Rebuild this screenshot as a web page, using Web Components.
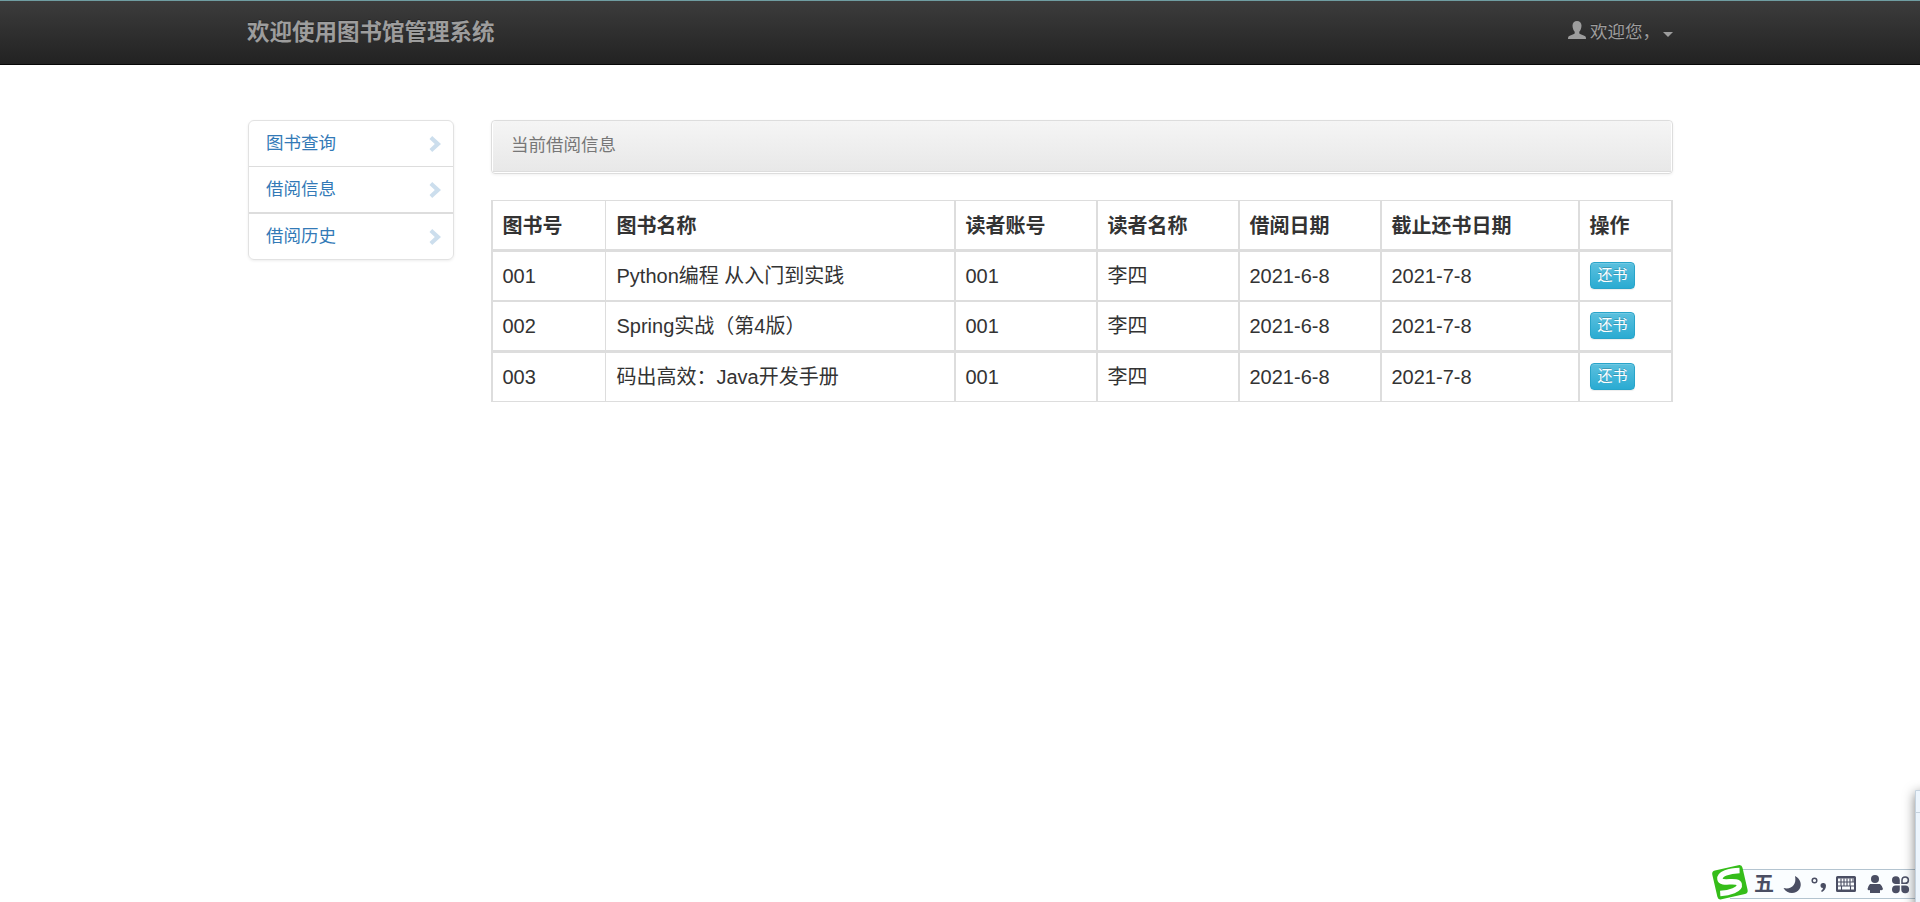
<!DOCTYPE html>
<html lang="zh-CN">
<head>
<meta charset="utf-8">
<title>图书馆管理系统</title>
<style>
  html, body{
    margin: 0;
    height: 100%;
    overflow: hidden;
  }
  body{
    background: #fff;
    color: #333;
    font-family: "Liberation Sans", "Noto Sans CJK SC", sans-serif;
    font-size: 17.5px;
    line-height: 25px;
  }
  main{
    display: flex;
    align-items: flex-start;
    gap: 37px;
    width: 1425px;
    margin: 55px 0 0 248px;
  }
  .content{
    width: 1182px;
  }
</style>
</head>
<body>

<template id="nav-bar">
  <style>
    :host{
      display: flex;
      box-sizing: border-box;
      height: 65px;
      justify-content: space-between;
      align-items: center;
      padding: 0 247px 0 247px;
      border-top: 1px solid #6f9da1;
      border-bottom: 1px solid #080808;
      background: linear-gradient(#3c3c3c, #222);
      color: #9d9d9d;
      text-shadow: 0 -1px 0 rgba(0,0,0,.25);
    }
    .brand{
      font-size: 22.5px;
      font-weight: bold;
    }
    .user{
      display: flex;
      align-items: center;
    }
    .user svg{
      margin: -5px 4px 0 0;
    }
    .caret{
      margin: 3px 0 0 3px;
      border-top: 5px solid;
      border-left: 5px solid transparent;
      border-right: 5px solid transparent;
    }
  </style>
  <div class="brand"><slot name="brand"></slot></div>
  <div class="user">
    <svg width="18" height="18" viewBox="0 0 18 18" fill="#9d9d9d"><path d="M9 0C6.400 0 4.500 1.800 4.500 4.500C4.500 7.500 5.600 9.600 6.700 10.800V12.500C5.500 13.600 1.500 14.300.5 15.500Q0 16.300 0 18H18Q18 16.300 17.500 15.500C16.500 14.300 12.500 13.600 11.300 12.500V10.800C12.400 9.600 13.500 7.500 13.500 4.500C13.500 1.800 11.600 0 9 0Z"/></svg>
    <slot></slot>
    <span class="caret"></span>
  </div>
</template>

<template id="side-menu">
  <style>
    :host{
      display: block;
      box-sizing: border-box;
      width: 206px;
      border: 1px solid #e2e2e2;
      border-radius: 6px;
      box-shadow: 0 1px 3px rgba(0,0,0,.075);
    }
  </style>
  <slot></slot>
</template>

<template id="side-item">
  <style>
    :host{
      display: flex;
      height: 45px;
      align-items: center;
      justify-content: space-between;
      padding: 0 12px 0 17px;
      color: #337ab7;
    }
    :host(:nth-child(2)){
      border-top: 1px solid #ddd;
      border-bottom: 2px solid #ddd;
    }
    span{
      margin-top: -1px;
    }
    svg{
      margin-top: 0;
    }
  </style>
  <span><slot></slot></span>
  <svg width="12" height="16" viewBox="0 0 12 16" fill="#ccdeed"><path d="M3.200 0L12 8L3.200 16L0.500 12.900L5.800 8L0.500 3.100Z"/></svg>
</template>

<template id="panel-box">
  <style>
    :host{
      display: block;
      box-sizing: border-box;
      height: 54px;
      padding: 0 1px 1px;
      border: 1px solid #ddd;
      border-radius: 4px;
      box-shadow: 0 1px 3px rgba(0,0,0,.06);
    }
    .heading{
      box-sizing: border-box;
      height: 51px;
      padding: 12px 18px;
      border-bottom: 1px solid #ddd;
      border-radius: 3px 3px 0 0;
      background: linear-gradient(#f5f5f5, #e8e8e8);
      color: #777;
    }
  </style>
  <div class="heading"><slot></slot></div>
</template>

<template id="lend-table">
  <style>
    :host{
      display: block;
      margin-top: 26px;
    }
    table{
      width: 1182px;
      table-layout: fixed;
      border-collapse: separate;
      border-spacing: 0;
      border: solid #ddd;
      border-width: 1px 0 0 2px;
      font-size: 20px;
      line-height: 28px;
    }
    th, td{
      box-sizing: border-box;
      height: 50px;
      padding: 0 10px 0 9.5px;
      border: solid #ddd;
      border-width: 0 2px 2px 0;
      text-align: left;
      white-space: nowrap;
    }
    th{
      padding-top: 2px;
    }
    tr:nth-child(odd) > *{
      height: 51px;
      border-bottom-width: 3px;
    }
    tr:last-child > *{
      height: 49px;
      border-bottom-width: 1px;
    }
    tr > :first-child{
      border-right-width: 1px;
    }
    tr > :nth-child(2){
      padding-left: 10.5px;
    }
  </style>
  <table>
    <colgroup>
      <col style="width:113px"><col style="width:350px"><col style="width:142px"><col style="width:142px"><col style="width:142px"><col style="width:198px"><col style="width:93px">
    </colgroup>
    <tbody></tbody>
  </table>
</template>

<template id="info-button">
  <style>
    :host{
      display: block;
      width: 45px;
      margin: -1px 0 1px .5px;
    }
    button{
      display: block;
      box-sizing: border-box;
      width: 45px;
      height: 27px;
      padding: 0;
      border: 1px solid #28a4c9;
      border-radius: 4px;
      background: linear-gradient(#5bc0de, #2aabd2);
      box-shadow: inset 0 1px 0 rgba(255,255,255,.15), 0 1px 1px rgba(0,0,0,.075);
      color: #fff;
      font: 15px/22px "Liberation Sans", "Noto Sans CJK SC", sans-serif;
      text-shadow: 0 -1px 0 rgba(0,0,0,.2);
    }
  </style>
  <button><slot></slot></button>
</template>

<!-- Input method bar floating over the page corner -->
<template id="ime-bar">
  <style>
    :host{
      position: absolute;
      right: 0;
      bottom: 0;
      width: 220px;
      height: 122px;
      overflow: hidden;
    }
    svg{
      display: block;
    }
    .window{
      filter: drop-shadow(0 3px 6px rgba(0,0,0,.5));
    }
    .mode{
      position: absolute;
      left: 54px;
      top: 89px;
      color: #4a4e63;
      font: bold 20px/28px "Noto Sans CJK SC", sans-serif;
    }
  </style>
  <svg width="220" height="122" viewBox="0 0 220 122">
    <path d="M42 89H215V119H42Z" fill="#fafdff"/>
    <path d="M42 89.500H215M30 118.500H215" stroke="#b4c4d0"/>
    <path class="window" d="M215 10H260V160H215Z" fill="#edf5fd"/>
    <path d="M215.500 122V10.500H220M215 32.500H220" fill="none" stroke="#c5d2de"/>
    <g transform="rotate(-13 30 102.500)">
      <rect x="14.500" y="87.500" width="31" height="29.500" rx="3.500" fill="#35bd19"/>
      <path d="M42 93C32 91 21.500 91.500 21 97C20.500 103 38.500 100.500 38.500 106.500C38.500 112 27 112.500 18 111" fill="none" stroke="#fff" stroke-width="5.500"/>
    </g>
    <g fill="#4a4e63">
      <path d="M95 96C101 99 102 105 99.500 109C96 114.500 87 114.500 83.500 108C91 110 97 105 95 96Z"/>
      <circle cx="114.500" cy="100.500" r="2.300" fill="none" stroke="#4a4e63" stroke-width="1.500"/>
      <path d="M123 103A2.600 2.600 0 0 1 126 105.500Q126 109.500 122 112L121 111Q123 109.500 123 108A2.500 2.500 0 0 1 123 103Z"/>
      <path fill-rule="evenodd" d="M137.500 96H154.500Q156 96 156 97.500V110.500Q156 112 154.500 112H137.500Q136 112 136 110.500V97.500Q136 96 137.500 96ZM138 98.500V109.500H154V98.500Z"/>
      <path d="M141 98.500V106M144 98.500V106M147 98.500V106M150 98.500V106M153 98.500V102M138 102H154M138 106H154M141.500 106V110M150.500 106V110" stroke="#4a4e63" stroke-width="1.100"/>
      <circle cx="175" cy="99" r="4"/>
      <path d="M170 104H180Q182.500 106 183 109Q182 111 180 110V113H170V110Q168 111 167.500 109Q168 106 170 104Z"/>
      <path d="M199.800 104H196A3.900 3.900 0 1 1 199.800 100ZM199.800 105.500V109.500A3.900 3.900 0 1 1 196 105.500ZM201.300 105.500H205A3.900 3.900 0 1 1 201.300 109.500Z"/>
      <path d="M202 103.300V100A3.200 3.200 0 1 1 205.200 103.300Z" fill="none" stroke="#4a4e63" stroke-width="1.500"/>
    </g>
  </svg>
  <span class="mode">五</span>
</template>

<nav-bar><span slot="brand">欢迎使用图书馆管理系统</span>欢迎您，</nav-bar>
<main>
  <side-menu>
    <side-item>图书查询</side-item>
    <side-item>借阅信息</side-item>
    <side-item>借阅历史</side-item>
  </side-menu>
  <div class="content">
    <panel-box>当前借阅信息</panel-box>
    <lend-table></lend-table>
  </div>
</main>
<ime-bar></ime-bar>

<script>
class TemplateElement extends HTMLElement {
  constructor() {
    super();
    var shadow = this.attachShadow({mode: 'open'});
    var tpl = document.getElementById(this.localName);
    shadow.appendChild(tpl.content.cloneNode(true));
  }
}

class LendTable extends TemplateElement {
  connectedCallback() {
    var head = ['图书号', '图书名称', '读者账号', '读者名称', '借阅日期', '截止还书日期', '操作'];
    var rows = [
      ['001', 'Python编程 从入门到实践', '001', '李四', '2021-6-8', '2021-7-8'],
      ['002', 'Spring实战（第4版）', '001', '李四', '2021-6-8', '2021-7-8'],
      ['003', '码出高效：Java开发手册', '001', '李四', '2021-6-8', '2021-7-8'],
    ];
    var html = '<tr>' + head.map(t => `<th>${t}</th>`).join('') + '</tr>';
    rows.forEach(row => {
      html += '<tr>' + row.map(t => `<td>${t}</td>`).join('') + '<td><info-button>还书</info-button></td></tr>';
    });
    this.shadowRoot.querySelector('tbody').innerHTML = html;
  }
}

['nav-bar', 'side-menu', 'side-item', 'panel-box', 'info-button', 'ime-bar'].forEach(name => {
  customElements.define(name, class extends TemplateElement {});
});
customElements.define('lend-table', LendTable);
</script>
</body>
</html>
